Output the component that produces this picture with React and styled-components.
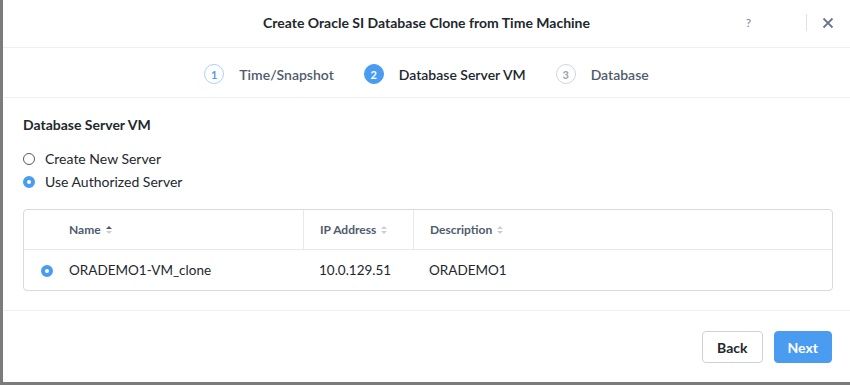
import React from 'react';
import styled, { createGlobalStyle } from 'styled-components';

const Global = createGlobalStyle`
  html, body { margin: 0; padding: 0; background: #7b7b7b; }
  body { font-family: Lato, "Liberation Sans", sans-serif; }
  #root { width: 850px; height: 385px; }
`;

const Frame = styled.div`
  width: 847px;
  height: 382px;
  margin-left: 3px;
  background: #fff;
  display: flex;
  flex-direction: column;
  color: #22272e;
`;

const Header = styled.div`
  height: 47px;
  border-bottom: 1px solid #edeff2;
  display: flex;
  align-items: center;
  position: relative;
  justify-content: center;
`;

const Title = styled.div`
  font-size: 14px;
  font-weight: 700;
  color: #22272e;
  margin-top: -2px;
`;

const Tools = styled.div`
  position: absolute;
  right: 16px;
  top: 0;
  height: 45px;
  display: flex;
  align-items: center;
`;

const Help = styled.span`
  font-size: 12px;
  color: #7a8494;
  margin-right: 55px;
`;

const Divider = styled.span`
  width: 1px;
  height: 17px;
  background: #dfe3e8;
  margin-right: 15px;
`;

const Steps = styled.div`
  height: 46px;
  padding-top: 3px;
  border-bottom: 1px solid #edeff2;
  display: flex;
  align-items: center;
  justify-content: center;
  gap: 30px;
`;

const Step = styled.div`
  display: flex;
  align-items: center;
  gap: 15px;
  font-size: 14px;
  font-weight: 600;
  color: ${p => (p.$active ? '#22272e' : '#4f5b6e')};
`;

const StepNum = styled.span`
  width: 20px;
  height: 20px;
  box-sizing: border-box;
  border-radius: 50%;
  display: flex;
  align-items: center;
  justify-content: center;
  font-size: 11px;
  font-weight: 700;
  background: ${p => (p.$state === 'active' ? '#4a9cf0' : '#fff')};
  color: ${p => (p.$state === 'active' ? '#fff' : p.$state === 'done' ? '#4a9cf0' : '#9aa3b0')};
  border: 1px solid ${p => (p.$state === 'active' ? '#4a9cf0' : p.$state === 'done' ? '#a9d2f8' : '#cfd5dd')};
`;

const Body = styled.div`
  flex: 1;
  padding: 18px 17px 0 20px;
  border-bottom: 1px solid #edeff2;
`;

const SectionTitle = styled.div`
  font-size: 14px;
  font-weight: 700;
  margin-bottom: 14px;
`;

const RadioRow = styled.label`
  display: flex;
  align-items: center;
  gap: 10px;
  font-size: 14px;
  height: 23px;
`;

const Radio = styled.span`
  width: 12px;
  height: 12px;
  box-sizing: border-box;
  border-radius: 50%;
  border: ${p => (p.$on ? '4px solid #4a9cf0' : '1px solid #4f5b6e')};
  background: #fff;
  flex-shrink: 0;
`;

const Table = styled.div`
  margin-top: 16px;
  border: 1px solid #d5dae1;
  border-radius: 4px;
`;

const Row = styled.div`
  display: grid;
  grid-template-columns: 29px 250px 110px 1fr;
  height: ${p => (p.$head ? '39px' : '40px')};
  border-bottom: ${p => (p.$head ? '1px solid #e6e9ee' : 'none')};
`;

const Cell = styled.div`
  display: flex;
  align-items: center;
  padding-left: ${p => (p.$pad ? '16px' : '0')};
  border-left: ${p => (p.$line ? '1px solid #e6e9ee' : 'none')};
  font-size: ${p => (p.$head ? '12px' : '13.5px')};
  font-weight: ${p => (p.$head ? 700 : 400)};
  color: ${p => (p.$head ? '#4f5b6e' : '#22272e')};
  gap: 5px;
`;

const RadioCell = styled.div`
  display: flex;
  align-items: center;
  justify-content: flex-end;
  padding-top: 1px;
`;

const Footer = styled.div`
  height: 70px;
  display: flex;
  align-items: center;
  justify-content: flex-end;
  gap: 11px;
  padding-right: 18px;
  padding-top: 1px;
`;

const Button = styled.button`
  height: 32px;
  padding: 0 ${p => (p.$primary ? '13px' : '14px')};
  font-family: inherit;
  font-size: 14px;
  font-weight: 700;
  border-radius: 4px;
  border: 1px solid ${p => (p.$primary ? '#4a9cf0' : '#ccd2da')};
  background: ${p => (p.$primary ? '#4a9cf0' : '#fff')};
  color: ${p => (p.$primary ? '#fff' : '#22272e')};
`;

const Sort = ({ up }) => (
  <svg width="6" height="10" viewBox="0 0 6 10">
    <path d="M0 4 L3 1 L6 4 Z" fill={up ? '#4f5b6e' : '#c9cfd7'} />
    <path d="M0 6 L3 9 L6 6 Z" fill="#c9cfd7" />
  </svg>
);

const Close = () => (
  <svg width="12" height="12" viewBox="0 0 12 12">
    <path d="M1.5 1.5 L10.5 10.5 M10.5 1.5 L1.5 10.5" stroke="#6b7788" strokeWidth="1.8" />
  </svg>
);

export default function App() {
  return (
    <>
      <Global />
      <Frame>
        <Header>
          <Title>Create Oracle SI Database Clone from Time Machine</Title>
          <Tools>
            <Help>?</Help>
            <Divider />
            <Close />
          </Tools>
        </Header>
        <Steps>
          <Step><StepNum $state="done">1</StepNum>Time/Snapshot</Step>
          <Step $active><StepNum $state="active">2</StepNum>Database Server VM</Step>
          <Step><StepNum>3</StepNum>Database</Step>
        </Steps>
        <Body>
          <SectionTitle>Database Server VM</SectionTitle>
          <RadioRow><Radio />Create New Server</RadioRow>
          <RadioRow><Radio $on />Use Authorized Server</RadioRow>
          <Table>
            <Row $head>
              <Cell />
              <Cell $head $pad>Name <Sort up /></Cell>
              <Cell $head $pad $line>IP Address <Sort /></Cell>
              <Cell $head $pad $line>Description <Sort /></Cell>
            </Row>
            <Row>
              <RadioCell><Radio $on /></RadioCell>
              <Cell $pad>ORADEMO1-VM_clone</Cell>
              <Cell $pad>10.0.129.51</Cell>
              <Cell $pad>ORADEMO1</Cell>
            </Row>
          </Table>
        </Body>
        <Footer>
          <Button>Back</Button>
          <Button $primary>Next</Button>
        </Footer>
      </Frame>
    </>
  );
}
